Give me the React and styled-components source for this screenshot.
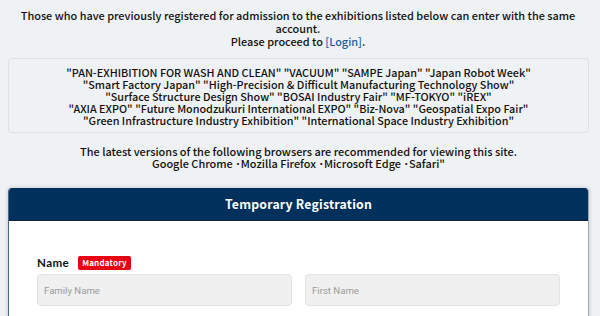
import styled, { createGlobalStyle } from "styled-components";

const GlobalStyle = createGlobalStyle`
  body {
    margin: 0;
    background: #eff2f4;
    font-family: "Noto Sans CJK JP", "Noto Sans", sans-serif;
    color: #111;
  }
`;

const Page = styled.div`
  padding: 9px 11px 0 8px;
`;

const Notice = styled.p`
  margin: 0;
  padding: 0 9px 0 8px;
  text-align: center;
  font-size: 10.9px;
  font-weight: 500;
  line-height: 13px;
`;

const LoginLink = styled.a`
  color: #1a5fa0;
  text-decoration: none;
`;

const ExpoBox = styled.div`
  margin-top: 10px;
  padding: 7px 10px 6px;
  border: 1px solid #dde1e4;
  border-radius: 3px;
  text-align: center;
  font-size: 10.8px;
  line-height: 12px;
  font-weight: 500;
`;

const Browsers = styled.p`
  margin: 13px 0 0;
  text-align: center;
  font-size: 10.95px;
  font-weight: 500;
  line-height: 11.5px;
`;

const Card = styled.section`
  margin-top: 19px;
  background: #fff;
  border-left: 1px solid #4d6385;
  border-right: 1px solid #a3abb4;
  border-radius: 4px 4px 0 0;
  box-shadow: 0 0 4px rgba(0, 0, 0, 0.2);
  overflow: hidden;
`;

const CardHeader = styled.h2`
  margin: 0;
  height: 32px;
  background: #00305b;
  border-bottom: 1px solid #14213a;
  color: #fff;
  font-size: 12.3px;
  font-weight: 700;
  display: flex;
  align-items: center;
  justify-content: center;
  letter-spacing: 0.2px;
`;

const CardBody = styled.div`
  padding: 34px 28px 20px;
`;

const FieldLabel = styled.div`
  display: flex;
  align-items: center;
  gap: 9px;
  height: 15px;
  font-family: "Lato", "Noto Sans", sans-serif;
  font-weight: 700;
  font-size: 11.6px;
  letter-spacing: 0.4px;
`;

const Badge = styled.span`
  background: #e60012;
  color: #fff;
  font-family: "Noto Sans CJK JP", sans-serif;
  font-size: 8px;
  font-weight: 700;
  letter-spacing: 0.2px;
  padding: 2px 4px;
  border-radius: 2px;
  line-height: 10px;
`;

const Inputs = styled.div`
  display: grid;
  grid-template-columns: 255px 255px;
  column-gap: 13px;
  margin-top: 4px;
`;

const TextInput = styled.input`
  height: 32px;
  box-sizing: border-box;
  border: 1px solid #e3e3e3;
  border-radius: 4px;
  background: #f0f0f0;
  padding: 0 6px;
  font-family: "Roboto", sans-serif;
  font-size: 9.6px;
  &::placeholder {
    color: #9a9a9a;
  }
`;

const expos = [
  '"PAN-EXHIBITION FOR WASH AND CLEAN" "VACUUM" "SAMPE Japan" "Japan Robot Week"',
  '"Smart Factory Japan" "High-Precision & Difficult Manufacturing Technology Show"',
  '"Surface Structure Design Show" "BOSAI Industry Fair" "MF-TOKYO" "iREX"',
  '"AXIA EXPO" "Future Monodzukuri International EXPO" "Biz-Nova" "Geospatial Expo Fair"',
  '"Green Infrastructure Industry Exhibition" "International Space Industry Exhibition"',
];

export default function App() {
  return (
    <>
      <GlobalStyle />
      <Page>
        <Notice>
          Those who have previously registered for admission to the exhibitions
          listed below can enter with the same account.
          <br />
          Please proceed to <LoginLink href="#">[Login]</LoginLink>.
        </Notice>
        <ExpoBox>
          {expos.map((line) => (
            <div key={line}>{line}</div>
          ))}
        </ExpoBox>
        <Browsers>
          The latest versions of the following browsers are recommended for
          viewing this site.
          <br />
          Google Chrome ･Mozilla Firefox ･Microsoft Edge ･Safari"
        </Browsers>
        <Card>
          <CardHeader>Temporary Registration</CardHeader>
          <CardBody>
            <FieldLabel>
              Name <Badge>Mandatory</Badge>
            </FieldLabel>
            <Inputs>
              <TextInput placeholder="Family Name" />
              <TextInput placeholder="First Name" />
            </Inputs>
          </CardBody>
        </Card>
      </Page>
    </>
  );
}
